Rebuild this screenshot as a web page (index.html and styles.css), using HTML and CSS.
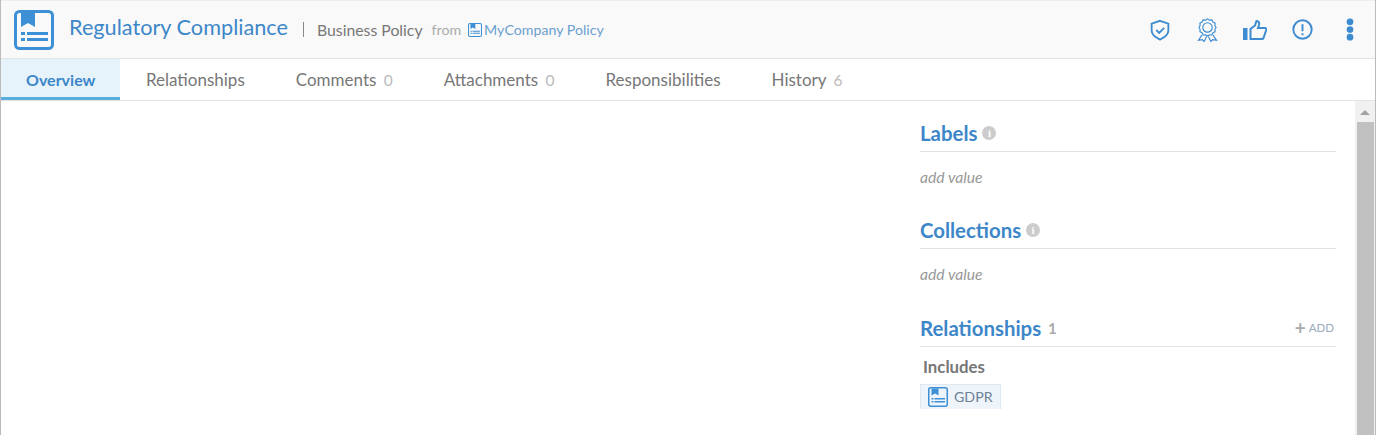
FILE: index.html
```html
<!DOCTYPE html>
<html lang="en">
<head>
  <meta charset="UTF-8" />
  <title>Regulatory Compliance</title>
  <link rel="stylesheet" href="styles.css">
</head>
<body>
  <svg class="defs" width="0" height="0">
    <symbol id="policy" viewBox="0 0 40 40">
      <rect x="1.5" y="1.5" width="37" height="37" rx="4" fill="none" stroke="currentColor" stroke-width="3"/>
      <path d="M7 3h14v14l-7-4-7 4z" fill="currentColor"/>
      <path d="M7 22h4v3H7zM13 22h21v3H13zM7 28h4v3H7zM13 28h21v3H13z" fill="currentColor"/>
    </symbol>
  </svg>

  <div class="page">
    <header class="top">
      <svg class="logo"><use href="#policy"/></svg>
      <h1>Regulatory Compliance</h1>
      <span class="sep"></span>
      <span class="type">Business Policy</span>
      <span class="from">from</span>
      <svg class="small-logo"><use href="#policy"/></svg>
      <a class="parent">MyCompany Policy</a>
      <div class="actions">
        <span class="act">
          <svg class="shield" viewBox="0 0 24 26" fill="none" stroke="currentColor" stroke-width="2.200">
            <path d="M12 2l10 3.500V14c0 5-4.500 8-10 10.500C6.500 22 2 19 2 14V5.500z"/>
            <path d="M7.500 13l3.500 3.500 6-6"/>
          </svg>
        </span>
        <span class="act">
          <svg class="ribbon" viewBox="0 0 24 28" fill="none" stroke="currentColor" stroke-width="1.300">
            <path d="M12 1l2.400 1.500 2.800-.3 1.200 2.600 2.500 1.200-.3 2.800L22 11l-1.400 2.200.3 2.800-2.500 1.200-1.200 2.600-2.800-.3L12 21l-2.400-1.500-2.800.3-1.200-2.600-2.500-1.200.3-2.800L2 11l1.400-2.200-.3-2.800 2.500-1.200 1.200-2.600 2.800.3z"/>
            <circle cx="12" cy="11" r="5.500"/>
            <path d="M5.500 20L1.500 26l4.500-.8L8 27.500l3-6M18.500 20l4 6-4.500-.8-2 2.300-3-6"/>
          </svg>
        </span>
        <span class="act">
          <svg class="thumb-up" viewBox="0 0 24 20" fill="none" stroke="currentColor" stroke-width="2">
            <path d="M0 8h4.500v12H0z" fill="currentColor" stroke="none"/>
            <path d="M7.500 19V9l4.500-3.500L13.500 1c2.500 0 3 2 2.500 4l-1 3H22c1 0 1.500 1 1.200 2l-2.700 8c-.3.700-.8 1-1.500 1z"/>
          </svg>
        </span>
        <span class="act">
          <svg class="alert" viewBox="0 0 24 24" fill="none" stroke="currentColor" stroke-width="2.200">
            <circle cx="12" cy="12" r="10.500"/>
            <path d="M12 6v8M12 16.200v2.400"/>
          </svg>
        </span>
        <span class="act">
          <svg class="dots" viewBox="0 0 8 24" fill="currentColor">
            <circle cx="4" cy="4" r="3.500"/>
            <circle cx="4" cy="12" r="3.500"/>
            <circle cx="4" cy="20" r="3.500"/>
          </svg>
        </span>
      </div>
    </header>

    <nav class="tabs">
      <a class="tab active">Overview</a>
      <a class="tab">Relationships</a>
      <a class="tab">Comments <span class="count">0</span></a>
      <a class="tab">Attachments <span class="count">0</span></a>
      <a class="tab">Responsibilities</a>
      <a class="tab">History <span class="count">6</span></a>
    </nav>

    <div class="content">
      <main class="main"></main>
      <aside class="side">
        <section class="block">
          <h2>Labels <span class="info">i</span></h2>
          <p class="empty">add value</p>
        </section>
        <section class="block">
          <h2>Collections <span class="info">i</span></h2>
          <p class="empty">add value</p>
        </section>
        <section class="block">
          <h2>Relationships <span class="num">1</span><a class="add"><b>+</b> ADD</a></h2>
          <h3>Includes</h3>
          <a class="chip"><svg class="chip-logo"><use href="#policy"/></svg>GDPR</a>
        </section>
      </aside>
      <div class="scrollbar">
        <div class="arrow"></div>
        <div class="thumb"></div>
      </div>
    </div>
  </div>
</body>
</html>
```

FILE: styles.css
```css
html, body {
  margin: 0;
  height: 100%;
  overflow: hidden;
}
body {
  font-family: "Lato", "Noto Sans", sans-serif;
  background: #fff;
  color: #777;
}
.defs {
  position: absolute;
}
.page {
  display: flex;
  flex-direction: column;
  height: 100%;
  border-left: 1px solid #bbb;
  border-right: 1px solid #bbb;
  box-sizing: border-box;
}
.top {
  display: flex;
  align-items: center;
  flex: none;
  height: 57px;
  padding-left: 13px;
  background: #f9f9f9;
  border-top: 1px solid #eee;
  border-bottom: 1px solid #e3e3e3;
}
.logo {
  width: 40px;
  height: 40px;
  color: #3d8fd6;
}
h1 {
  margin: 0 0 0 15px;
  padding-bottom: 5px;
  font-size: 21.7px;
  font-weight: 400;
  color: #3d87c9;
}
.sep {
  width: 1px;
  height: 15px;
  margin: 0 13px 0 15px;
  background: #888;
}
.type {
  font-size: 15.8px;
  color: #777;
}
.from {
  margin-left: 9px;
  font-size: 14.2px;
  color: #aaa;
}
.small-logo {
  width: 14px;
  height: 14px;
  margin: 0 2px 0 7px;
  color: #3d8fd6;
}
.parent {
  font-size: 14.2px;
  color: #6b9fd0;
}
.actions {
  display: flex;
  align-items: center;
  margin-left: auto;
  margin-right: 1px;
  color: #3d8bd0;
}
.act {
  display: flex;
  justify-content: center;
  width: 47.500px;
}
.shield {
  width: 20px;
  height: 22px;
}
.ribbon {
  width: 21px;
  height: 24px;
}
.thumb-up {
  width: 24px;
  height: 20px;
}
.alert {
  width: 21px;
  height: 21px;
}
.dots {
  width: 8px;
  height: 23px;
}
.tabs {
  display: flex;
  flex: none;
  height: 41px;
  border-bottom: 1px solid #e3e3e3;
}
.tab {
  display: flex;
  align-items: center;
  gap: 3px;
  padding: 0 25.500px;
  font-size: 17px;
  color: #777;
  white-space: pre;
}
.tab.active {
  padding: 0 25px;
  background: #e6f3fb;
  color: #3d87c9;
  font-size: 16px;
  font-weight: 700;
  box-shadow: inset 0 -3px 0 #5aaedd;
}
.count {
  font-size: 15.5px;
  color: #bbb;
}
.content {
  display: flex;
  flex: 1;
  min-height: 0;
}
.main {
  flex: 1;
}
.side {
  width: 416px;
  margin-right: 19px;
  padding-top: 20px;
  overflow: hidden;
}
.block {
  margin-bottom: 32.300px;
}
h2 {
  display: flex;
  align-items: center;
  gap: 5px;
  margin: 0;
  height: 24px;
  padding-bottom: 6px;
  font-size: 20.4px;
  font-weight: 700;
  color: #3d87c9;
  border-bottom: 1px solid #e3e3e3;
}
.info {
  width: 14px;
  height: 14px;
  border-radius: 50%;
  background: #ccc;
  color: #fff;
  font: 700 11px/14px "Liberation Serif", serif;
  text-align: center;
}
.num {
  margin-left: 2px;
  font-size: 15px;
  color: #aaa;
}
.add {
  display: flex;
  align-items: center;
  gap: 3px;
  margin-left: auto;
  margin-right: 2px;
  font-size: 11.5px;
  font-weight: 400;
  color: #9ab;
}
.add b {
  color: #aaa;
  font-size: 19px;
  line-height: 12px;
}
.empty {
  margin: 16px 0 0;
  font-size: 15.7px;
  font-style: italic;
  color: #999;
}
h3 {
  margin: 9px 0 7px 3px;
  font-size: 16.8px;
  font-weight: 700;
  color: #777;
}
.chip {
  display: inline-flex;
  align-items: center;
  gap: 6px;
  height: 24px;
  padding: 0 7px;
  font-size: 14.2px;
  color: #6c8296;
  background: #eef4f9;
  border: 1px solid #dde8f1;
  border-bottom: 0;
}
.chip-logo {
  width: 20px;
  height: 20px;
  color: #3d8fd6;
}
.scrollbar {
  display: flex;
  flex-direction: column;
  flex: none;
  width: 20px;
  background: #f1f1f1;
  overflow: hidden;
}
.arrow {
  flex: none;
  width: 0;
  height: 0;
  margin: 9px auto 0;
  border: 5px solid transparent;
  border-top: 0;
  border-bottom: 5px solid #a3a3a3;
}
.thumb {
  flex: 1;
  margin: 7px 1px 0 2px;
  background: #c1c1c1;
}
```
